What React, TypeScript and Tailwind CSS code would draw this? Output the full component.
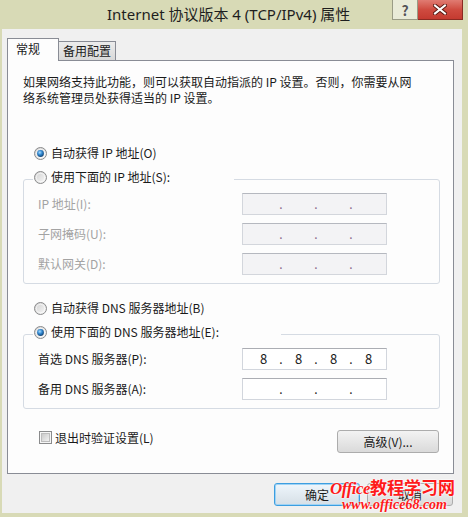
import React from "react";

function Radio({ checked }: { checked: boolean }) {
  return (
    <svg width="13" height="13" viewBox="0 0 13 13" className="shrink-0">
      <defs>
        <linearGradient id="rbg" x1="0" y1="0" x2="1" y2="1">
          <stop offset="0" stopColor="#cfcfcf" />
          <stop offset="1" stopColor="#fafafa" />
        </linearGradient>
        <radialGradient id="rdot" cx="0.4" cy="0.35" r="0.75">
          <stop offset="0" stopColor="#a8dcff" />
          <stop offset="0.45" stopColor="#2f86cf" />
          <stop offset="1" stopColor="#0d355f" />
        </radialGradient>
      </defs>
      <circle cx="6.5" cy="6.5" r="6" fill="url(#rbg)" stroke="#8a8b8c" />
      <circle cx="6.5" cy="6.5" r="4.2" fill="none" stroke="#ffffff" strokeOpacity="0.6" />
      {checked && <circle cx="6.5" cy="6.5" r="3.4" fill="url(#rdot)" />}
    </svg>
  );
}

function Checkbox() {
  return (
    <svg width="13" height="13" viewBox="0 0 13 13" className="shrink-0">
      <defs>
        <linearGradient id="cbg" x1="0" y1="0" x2="1" y2="1">
          <stop offset="0" stopColor="#c8c8c8" />
          <stop offset="1" stopColor="#f4f4f4" />
        </linearGradient>
      </defs>
      <rect x="0.5" y="0.5" width="12" height="12" fill="#f6f6f6" stroke="#8a8b8c" />
      <rect x="2.5" y="2.5" width="8" height="8" fill="url(#cbg)" stroke="#bdbdbd" />
    </svg>
  );
}

function IpBox({ parts, disabled }: { parts: string[]; disabled?: boolean }) {
  return (
    <div
      className={
        disabled
          ? "w-[145px] h-[22px] shrink-0 border border-[#d3d6dc] border-t-[#b5b8bf] bg-[#f3f3f5] flex items-center pl-[7px] text-[#8a6a8a]"
          : "w-[145px] h-[22px] shrink-0 border border-[#d2d6dd] border-t-[#abadb3] bg-white flex items-center pl-[7px] text-[#1a1a1a]"
      }
    >
      {parts.map((p, i) => (
        <React.Fragment key={i}>
          <span className="w-[27px] text-center text-[13px] text-[#1a1a1a]">{p}</span>
          {i < 3 && <span className="w-[8px] text-center leading-[14px]">.</span>}
        </React.Fragment>
      ))}
    </div>
  );
}

function Row({ label, parts, disabled }: { label: string; parts: string[]; disabled?: boolean }) {
  return (
    <div className="flex items-center h-[22px]">
      <span className={disabled ? "w-[204px] text-[#a3a3a3]" : "w-[204px] text-[#1a1a1a]"}>{label}</span>
      <IpBox parts={parts} disabled={disabled} />
    </div>
  );
}

export default function App() {
  const empty = ["", "", "", ""];
  return (
    <div className="relative w-[468px] h-[517px] bg-[#d8dab6] flex flex-col font-['Noto_Sans_CJK_SC',sans-serif] text-[12px] text-[#1a1a1a] overflow-hidden">
      {/* Title bar */}
      <div className="h-[29px] flex items-start shrink-0">
        <div className="flex-1 pl-[107px] pt-[4px] text-[15px] leading-[20px] text-[#1e1e1e] font-['Noto_Sans','Noto_Sans_CJK_SC',sans-serif]">
          Internet 协议版本 4 (TCP/IPv4) 属性
        </div>
        <div className="flex mr-[5px]">
          <div className="w-[26px] h-[20px] border border-[#9a9c86] border-t-0 bg-[#e9ebd8] flex items-center justify-center text-[14px] font-bold text-[#555] leading-none [text-shadow:0_0_1px_#fff]">
            ?
          </div>
          <div className="w-[45px] h-[20px] border border-[#8b2a22] border-t-0 border-l-0 bg-linear-to-b from-[#e07b72] via-[#cf4b40] to-[#c43a30] flex items-center justify-center">
            <svg width="14" height="11" viewBox="0 0 14 11">
              <path d="M2 1.5 L12 9.5 M12 1.5 L2 9.5" stroke="#5a1a14" strokeWidth="4" strokeLinecap="square" />
              <path d="M2 1.5 L12 9.5 M12 1.5 L2 9.5" stroke="#ffffff" strokeWidth="2" strokeLinecap="square" />
            </svg>
          </div>
        </div>
      </div>

      {/* Client area */}
      <div className="ml-[2px] mr-[6px] h-[484px] bg-[#f0f0f0] pl-[5px] pr-[8px] pt-[9px] flex flex-col">
        {/* Tabs */}
        <div className="flex items-end h-[22px]">
          <div className="relative z-10 w-[52px] h-[23px] -mb-[1px] bg-[#fdfdfd] border border-b-0 border-[#898c95] pl-[8px] pt-[2px] leading-[16px]">
            常规
          </div>
          <div className="w-[57px] h-[19px] bg-linear-to-b from-[#ececec] to-[#d9d9d9] border-t border-r border-[#898c95] pl-[4px] leading-[17px]">
            备用配置
          </div>
        </div>

        {/* Panel */}
        <div className="w-[447px] h-[414px] bg-[#fdfdfd] border border-[#898c95] pl-[15px] pr-[13px] pt-[13px] flex flex-col">
          <p className="leading-[16px]">
            如果网络支持此功能，则可以获取自动指派的 IP 设置。否则，你需要从网
            <br />
            络系统管理员处获得适当的 IP 设置。
          </p>

          <div className="mt-[39px] h-[16px] flex items-center pl-[11px] gap-[4px]">
            <Radio checked />
            <span>自动获得 IP 地址(O)</span>
          </div>

          <div className="mt-[8px] h-[16px] relative z-10 flex">
            <div className="ml-[10px] w-[201px] bg-[#fdfdfd] flex items-center pl-[1px] gap-[4px]">
              <Radio checked={false} />
              <span>使用下面的 IP 地址(S):</span>
            </div>
          </div>
          <div className="-mt-[6px] border border-[#d5dbe3] rounded-[3px] pt-[13px] pb-[8px] pl-[14px] flex flex-col gap-[8px]">
            <Row label="IP 地址(I):" parts={empty} disabled />
            <Row label="子网掩码(U):" parts={empty} disabled />
            <Row label="默认网关(D):" parts={empty} disabled />
          </div>

          <div className="mt-[16px] h-[16px] flex items-center pl-[11px] gap-[4px]">
            <Radio checked={false} />
            <span>自动获得 DNS 服务器地址(B)</span>
          </div>

          <div className="mt-[8px] h-[16px] relative z-10 flex">
            <div className="ml-[10px] w-[248px] bg-[#fdfdfd] flex items-center pl-[1px] gap-[4px]">
              <Radio checked />
              <span>使用下面的 DNS 服务器地址(E):</span>
            </div>
          </div>
          <div className="-mt-[6px] border border-[#d5dbe3] rounded-[3px] pt-[13px] pb-[8px] pl-[14px] flex flex-col gap-[8px]">
            <Row label="首选 DNS 服务器(P):" parts={["8", "8", "8", "8"]} />
            <Row label="备用 DNS 服务器(A):" parts={empty} />
          </div>

          <div className="mt-[21px] flex items-start justify-between">
            <div className="mt-[1px] pl-[16px] flex items-center gap-[3px] h-[13px]">
              <Checkbox />
              <span>退出时验证设置(L)</span>
            </div>
            <div className="mr-[1px] w-[102px] h-[23px] rounded-[3px] border border-[#acacac] bg-linear-to-b from-[#f3f3f3] to-[#dadada] flex items-center justify-center">
              高级(V)...
            </div>
          </div>
        </div>

        {/* Bottom buttons */}
        <div className="mt-[9px] flex justify-end gap-[7px] pr-[1px]">
          <div className="w-[86px] h-[23px] rounded-[3px] border border-[#3c9ee0] shadow-[inset_0_0_0_1px_#9fd3f5] bg-linear-to-b from-[#eef6fc] to-[#d6dfe6] flex items-center justify-center">
            确定
          </div>
          <div className="w-[86px] h-[23px] rounded-[3px] border border-[#acacac] bg-linear-to-b from-[#f3f3f3] to-[#dadada] flex items-center justify-center">
            取消
          </div>
        </div>
      </div>

      {/* Watermark overlay */}
      <div className="absolute left-[330px] top-[476px] flex flex-col items-start text-[#ff1a1a] [text-shadow:0_0_2px_#fff,0_0_2px_#fff]">
        <div className="flex items-baseline leading-[22px]">
          <span className="font-['Liberation_Serif',serif] italic font-bold text-[17px] tracking-[-0.5px]">Office</span>
          <span className="font-bold text-[17px]">教程学习网</span>
        </div>
        <div className="ml-[12px] -mt-[3px] font-['Liberation_Serif',serif] italic font-bold text-[14px] leading-[15px]">
          www.office68.com
        </div>
      </div>
    </div>
  );
}
